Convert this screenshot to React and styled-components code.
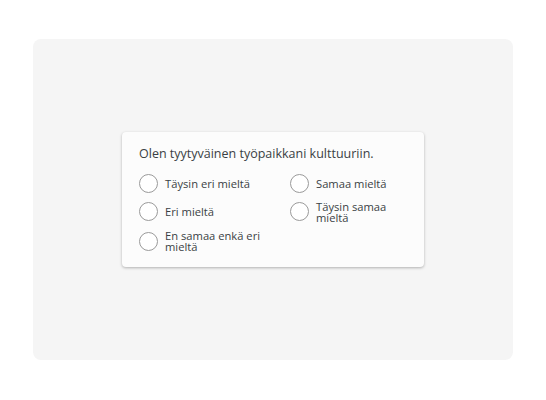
import React from 'react'
import styled, { createGlobalStyle } from 'styled-components'

const GlobalStyle = createGlobalStyle`
  html, body {
    margin: 0;
    padding: 0;
    background: #ffffff;
  }
  body {
    font-family: "Open Sans", "Liberation Sans", sans-serif;
    -webkit-font-smoothing: antialiased;
  }
`

const Page = styled.div`
  width: 546px;
  height: 400px;
  box-sizing: border-box;
  padding: 39px 33px 40px;
`

const Stage = styled.div`
  height: 100%;
  background: #f5f5f5;
  border-radius: 8px;
  display: flex;
  align-items: center;
  justify-content: center;
`

const Card = styled.div`
  width: 302px;
  box-sizing: border-box;
  padding: 13px 17px 15px;
  background: #fcfcfc;
  border-radius: 4px;
  box-shadow: 0 1px 3px rgba(0, 0, 0, 0.28);
`

const Question = styled.p`
  margin: 0 0 12px;
  font-size: 12.5px;
  line-height: 17px;
  color: #3a3f44;
`

const Options = styled.div`
  display: grid;
  grid-template-columns: 151px 1fr;
  grid-template-rows: repeat(3, auto);
  grid-auto-flow: column;
  row-gap: 7.5px;
`

const Option = styled.label`
  display: flex;
  align-items: center;
  gap: 7px;
  cursor: pointer;
`

const Circle = styled.span`
  flex: none;
  width: 17px;
  height: 17px;
  border: 1px solid #9a9a9a;
  border-radius: 50%;
  background: #ffffff;
`

const Label = styled.span`
  font-size: 11.2px;
  line-height: 11px;
  color: #3a3f44;
`

const choices = [
  'Täysin eri mieltä',
  'Eri mieltä',
  'En samaa enkä eri mieltä',
  'Samaa mieltä',
  'Täysin samaa mieltä',
]

export default function App() {
  return (
    <>
      <GlobalStyle />
      <Page>
        <Stage>
          <Card>
            <Question>Olen tyytyväinen työpaikkani kulttuuriin.</Question>
            <Options>
              {choices.map((c) => (
                <Option key={c}>
                  <Circle />
                  <Label>{c}</Label>
                </Option>
              ))}
            </Options>
          </Card>
        </Stage>
      </Page>
    </>
  )
}
